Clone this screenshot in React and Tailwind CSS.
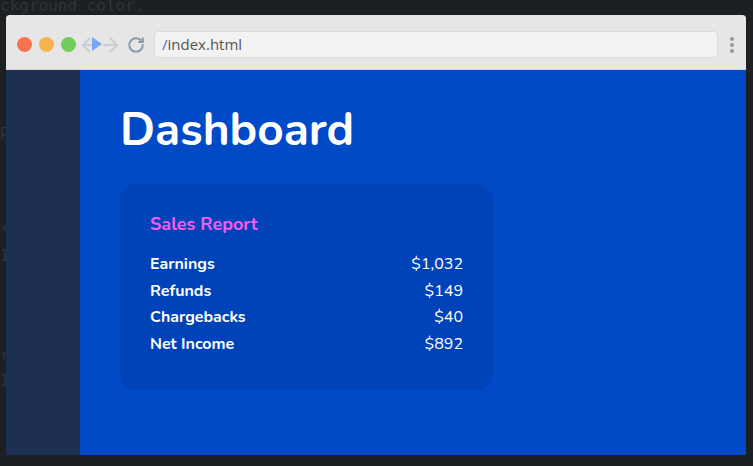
import React from 'react';
import { RotateCw } from 'lucide-react';

const codeLines = [
  { y: 0, text: 'ckground color.' },
  { y: 125, text: 'p' },
  { y: 225, text: '*' },
  { y: 250, text: 'I' },
  { y: 350, text: 'r' },
  { y: 375, text: 'I' },
];

const rows = [
  { label: 'Earnings', value: '$1,032' },
  { label: 'Refunds', value: '$149' },
  { label: 'Chargebacks', value: '$40' },
  { label: 'Net Income', value: '$892' },
];

function Toolbar() {
  return (
    <div className="h-[55px] pt-[5px] flex items-center bg-[#e6e6e6] border-b border-[#d4d4d4] rounded-t-[3px]">
      {/* traffic lights */}
      <div className="flex items-center gap-[7px] pl-[11px]">
        <span className="w-[15px] h-[15px] rounded-full bg-[#f7744f]" />
        <span className="w-[15px] h-[15px] rounded-full bg-[#f8b34e]" />
        <span className="w-[15px] h-[15px] rounded-full bg-[#71cd5c]" />
      </div>
      {/* nav arrows */}
      <svg width="38" height="18" viewBox="0 0 38 18" className="ml-[5px]">
        <path d="M9 2 L2 9 L9 16 M2 9 L16 9" fill="none" stroke="#c9ced3" strokeWidth="2.2" />
        <path d="M29 2 L36 9 L29 16 M22 9 L36 9" fill="none" stroke="#c9ced3" strokeWidth="2.2" />
        <path d="M11 1 L11 15 L21 8 Z" fill="#7aa6f5" />
      </svg>
      <RotateCw size={18} strokeWidth={2.6} className="ml-[8px] text-[#8e9aa6]" />
      <div className="ml-[9px] flex-1 h-[27px] flex items-center px-[7px] bg-[#f2f2f2] border border-[#dadada] rounded-[4px] font-['Open_Sans',sans-serif] text-[15px] text-[#555]">
        <span className="text-[#4a6fb5]">/</span>index.html
      </div>
      <div className="w-[28px] flex flex-col items-center gap-[2px]">
        <span className="w-[4px] h-[4px] rounded-full bg-[#8d9aa6]" />
        <span className="w-[4px] h-[4px] rounded-full bg-[#8d9aa6]" />
        <span className="w-[4px] h-[4px] rounded-full bg-[#8d9aa6]" />
      </div>
    </div>
  );
}

export default function App() {
  return (
    <div className="relative w-[753px] h-[466px] overflow-hidden bg-[#1d2023] font-['DejaVu_Sans_Mono',monospace] text-[16px] text-[#2e3438]">
      {/* editor text behind the window */}
      {codeLines.map(l => (
        <div key={l.y} className="absolute left-0 leading-[14px] whitespace-pre" style={{ top: l.y - 1 }}>
          {l.text}
        </div>
      ))}

      {/* browser window */}
      <div className="absolute left-[6px] top-[15px] w-[740px] h-[440px] flex flex-col rounded-t-[3px] overflow-hidden">
        <Toolbar />
        <div className="flex-1 flex font-['Nunito','Lato',sans-serif]">
          <aside className="w-[74px] bg-[#1d2f52]" />
          <main className="flex-1 bg-[#0049c7] pl-[40px] pt-[30px]">
            <h1 className="text-[46px] font-bold text-white leading-[60px]">Dashboard</h1>
            <section className="mt-[24px] w-[373px] h-[206px] rounded-[16px] bg-[#0043b9] px-[30px] pt-[27px]">
              <h2 className="text-[18px] font-bold text-[#f55cf0] leading-[26px]">Sales Report</h2>
              <div className="mt-[14px] flex flex-col">
                {rows.map(r => (
                  <div key={r.label} className="flex justify-between text-[16px] leading-[26.5px] text-white">
                    <span className="font-bold">{r.label}</span>
                    <span>{r.value}</span>
                  </div>
                ))}
              </div>
            </section>
          </main>
        </div>
      </div>
    </div>
  );
}
